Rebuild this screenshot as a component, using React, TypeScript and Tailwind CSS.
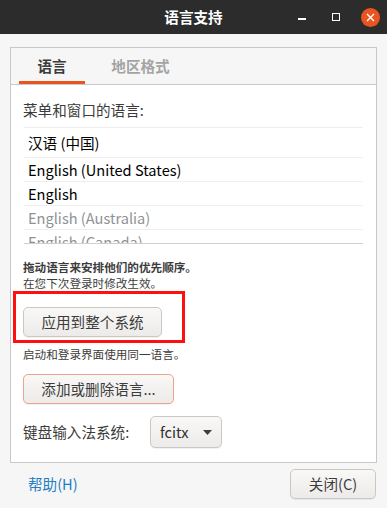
import React from 'react';

const LANGS = [
  { name: '汉语 (中国)', tall: true, muted: false },
  { name: 'English (United States)', tall: false, muted: false },
  { name: 'English', tall: false, muted: false },
  { name: 'English (Australia)', tall: false, muted: true },
  { name: 'English (Canada)', tall: false, muted: true },
];

const btn =
  'flex items-center justify-center rounded-[5px] border bg-gradient-to-b from-[#f8f8f7] to-[#edebe9] text-[14.6px] text-[#3c3c3c] shadow-[0_1px_1px_rgba(0,0,0,0.06)]';

function TitleBar() {
  return (
    <div className="grid h-[34px] grid-cols-[1fr_auto_1fr] items-center bg-[#2c2c2c]">
      <div />
      <div className="text-[14.6px] font-bold text-white">语言支持</div>
      <div className="flex justify-end">
        <div className="flex h-[34px] w-[34px] items-center justify-center">
          <div className="mt-[4px] h-[1.5px] w-[8px] bg-white" />
        </div>
        <div className="flex h-[34px] w-[34px] items-center justify-center">
          <div className="h-[8px] w-[8px] border border-white" />
        </div>
        <div className="flex h-[34px] w-[34px] items-center justify-center">
          <div className="flex h-[19px] w-[19px] items-center justify-center rounded-full bg-[#e95420]">
            <svg width="9" height="9" viewBox="0 0 9 9">
              <path d="M1 1L8 8M8 1L1 8" stroke="white" strokeWidth="1.4" />
            </svg>
          </div>
        </div>
      </div>
    </div>
  );
}

export default function App() {
  return (
    <div
      className="relative h-[508px] w-[387px] overflow-hidden bg-[#f6f6f6] text-[#3c3c3c]"
      style={{ fontFamily: '"Noto Sans CJK SC", "Noto Sans", sans-serif' }}
    >
      <TitleBar />

      <div className="px-[10px] pt-[13px]">
        <div className="flex h-[416px] flex-col border border-[#c8c8c8]">
          {/* tabs */}
          <div className="flex h-[37px] border-b border-[#c8c8c8] bg-[#f6f6f6] pl-[8px]">
            <div className="flex h-[36px] w-[66px] items-center justify-center border-b-[3px] border-[#e95420] pt-[3px] text-[14.6px] font-bold text-[#3c3c3c]">
              语言
            </div>
            <div className="ml-[7px] flex h-[36px] w-[97px] items-center justify-center pb-[0px] text-[14.6px] font-bold text-[#a4a4a4]">
              地区格式
            </div>
          </div>

          {/* page */}
          <div className="flex-1 bg-white px-[12px]">
            <div className="mt-[15px] h-[20px] text-[14.6px] leading-[20px]">菜单和窗口的语言:</div>

            <div className="mx-[1px] mt-[7px] border-t border-[#eeeeee]">
              <div className="h-[116px] overflow-hidden border-b border-[#cfcfcf]">
                {LANGS.map((l) => (
                  <div
                    key={l.name}
                    className={`flex items-center border-b border-[#efefef] pl-[4px] text-[14.6px] ${
                      l.tall ? 'h-[30px]' : 'h-[24px]'
                    } ${l.muted ? 'text-[#8f9293]' : 'text-black'}`}
                  >
                    {l.name}
                  </div>
                ))}
              </div>
            </div>

            <div className="mt-[15px] text-[11.6px] leading-[16px]">
              <div className="font-bold">拖动语言来安排他们的优先顺序。</div>
              <div>在您下次登录时修改生效。</div>
            </div>

            <button className={`${btn} mt-[16px] h-[30px] w-[139px] border-[#cdc7c2]`}>应用到整个系统</button>

            <div className="mt-[9px] text-[11.6px] leading-[16px]">启动和登录界面使用同一语言。</div>

            <button className={`${btn} mt-[12px] h-[30px] w-[151px] border-[#eea38b]`}>添加或删除语言...</button>

            <div className="mt-[12px] flex items-center">
              <span className="w-[127px] text-[14.6px]">键盘输入法系统:</span>
              <div className={`${btn} h-[32px] w-[72px] justify-start border-[#cdc7c2] pl-[9px]`}>
                <span className="text-[#2e2e2e]">fcitx</span>
                <svg className="ml-[14px]" width="9" height="5" viewBox="0 0 9 5">
                  <path d="M0 0H9L4.5 5Z" fill="#3c3c3c" />
                </svg>
              </div>
            </div>
          </div>
        </div>
      </div>

      {/* footer */}
      <div className="mt-[6px] flex items-center justify-between pl-[28px] pr-[11px]">
        <span className="text-[14.6px] text-[#1e80c2]">帮助(H)</span>
        <button className={`${btn} h-[30px] w-[86px] border-[#cdc7c2]`}>关闭(C)</button>
      </div>

      {/* red highlight annotation */}
      <div className="pointer-events-none absolute left-[13px] top-[291px] h-[52px] w-[172px] border-[3px] border-[#ff1010]" />
    </div>
  );
}
